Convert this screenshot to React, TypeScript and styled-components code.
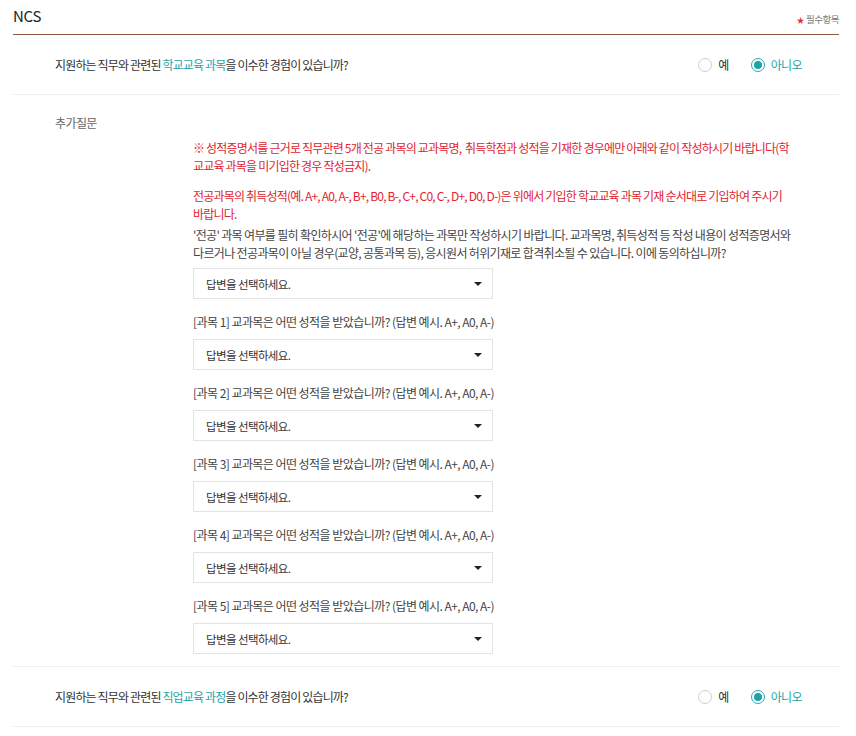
import React from "react";
import styled, { createGlobalStyle } from "styled-components";

const Global = createGlobalStyle`
  html, body { margin: 0; padding: 0; background: #fff; }
  body { font-family: "Noto Sans CJK KR", "Noto Sans", sans-serif; color: #333; }
  * { box-sizing: border-box; }
`;

const Page = styled.div`
  width: 826px;
  margin-left: 13px;
`;

const Header = styled.div`
  height: 35px;
  display: flex;
  align-items: center;
  justify-content: space-between;
  border-bottom: 1px solid #8a5b3e;
`;

const Title = styled.h2`
  margin: 0;
  font-size: 15px;
  font-weight: 400;
  color: #222;
  letter-spacing: -0.3px;
  line-height: 20px;
  margin-top: -2px;
`;

const Required = styled.span`
  font-size: 9.5px;
  color: #777;
  letter-spacing: -0.5px;
  display: flex;
  align-items: center;
  gap: 2px;
  margin-top: 4px;
`;

const Star = styled.span`
  color: #e0323b;
  font-size: 8px;
`;

const QuestionRow = styled.div`
  height: 60px;
  display: flex;
  align-items: center;
  padding-left: 42px;
  padding-right: 37px;
  border-bottom: 1px solid #eeeeee;
`;

const QuestionText = styled.p`
  margin: 0;
  flex: 1;
  font-size: 12px;
  letter-spacing: -0.85px;
  color: #333;
`;

const Accent = styled.span`
  color: #1ea3a8;
`;

const RadioGroup = styled.div`
  display: flex;
  align-items: center;
  gap: 22px;
`;

const RadioLabel = styled.label<{ $checked?: boolean }>`
  display: flex;
  align-items: center;
  gap: 6px;
  font-size: 12px;
  letter-spacing: -0.6px;
  color: ${(p) => (p.$checked ? "#1ea3a8" : "#333")};
`;

const RadioCircle = styled.span<{ $checked?: boolean }>`
  width: 14px;
  height: 14px;
  border-radius: 50%;
  border: 1px solid ${(p) => (p.$checked ? "#2aaab0" : "#cfcfcf")};
  display: flex;
  align-items: center;
  justify-content: center;
  background: #fff;
  &::after {
    content: "";
    width: 8px;
    height: 8px;
    border-radius: 50%;
    background: ${(p) => (p.$checked ? "#1ea3a8" : "transparent")};
  }
`;

const Extra = styled.div`
  padding: 19px 0 12px 42px;
  border-bottom: 1px solid #eeeeee;
`;

const ExtraTitle = styled.div`
  font-size: 12px;
  color: #666;
  letter-spacing: -0.6px;
  line-height: 18px;
`;

const ExtraBody = styled.div`
  margin-left: 138px;
  margin-top: 7px;
  width: 640px;
`;

const Notice = styled.p<{ $tone: "red" | "gray"; $gap: number }>`
  margin: ${(p) => p.$gap}px 0 0;
  font-size: 12px;
  line-height: 18px;
  letter-spacing: ${(p) => (p.$tone === "red" ? "-0.8px" : "-0.65px")};
  color: ${(p) => (p.$tone === "red" ? "#e1242f" : "#444")};
`;

const Field = styled.div<{ $first?: boolean }>`
  margin-top: ${(p) => (p.$first ? 6 : 14)}px;
`;

const FieldLabel = styled.div`
  font-size: 12px;
  line-height: 18px;
  letter-spacing: -0.55px;
  color: #444;
  margin-bottom: 8px;
`;

const Select = styled.div`
  width: 300px;
  height: 31px;
  border: 1px solid #e3e3e3;
  display: flex;
  align-items: center;
  justify-content: space-between;
  padding: 0 10px 0 12px;
  font-size: 11.5px;
  letter-spacing: -0.6px;
  color: #333;
  background: #fff;
`;

const Caret = styled.span`
  width: 0;
  height: 0;
  border-left: 4px solid transparent;
  border-right: 4px solid transparent;
  border-top: 4px solid #222;
`;

function Radios() {
  return (
    <RadioGroup>
      <RadioLabel>
        <RadioCircle />예
      </RadioLabel>
      <RadioLabel $checked>
        <RadioCircle $checked />아니오
      </RadioLabel>
    </RadioGroup>
  );
}

function AnswerSelect() {
  return (
    <Select>
      <span>답변을 선택하세요.</span>
      <Caret />
    </Select>
  );
}

export default function App() {
  return (
    <>
      <Global />
      <Page>
        <Header>
          <Title>NCS</Title>
          <Required>
            <Star>★</Star>필수항목
          </Required>
        </Header>
        <QuestionRow>
          <QuestionText>
            지원하는 직무와 관련된 <Accent>학교교육 과목</Accent>을 이수한 경험이 있습니까?
          </QuestionText>
          <Radios />
        </QuestionRow>
        <Extra>
          <ExtraTitle>추가질문</ExtraTitle>
          <ExtraBody>
            <Notice $tone="red" $gap={0}>
              ※ 성적증명서를 근거로 직무관련 5개 전공 과목의 교과목명,&nbsp; 취득학점과 성적을 기재한 경우에만 아래와 같이 작성하시기 바랍니다(학
              <br />
              교교육 과목을 미기입한 경우 작성금지).
            </Notice>
            <Notice $tone="red" $gap={12}>
              전공과목의 취득성적(예. A+, A0, A-, B+, B0, B-, C+, C0, C-, D+, D0, D-)은 위에서 기입한 학교교육 과목 기재 순서대로 기입하여 주시기
              <br />
              바랍니다.
            </Notice>
            <Notice $tone="gray" $gap={3}>
              '전공' 과목 여부를 필히 확인하시어 '전공'에 해당하는 과목만 작성하시기 바랍니다. 교과목명, 취득성적 등 작성 내용이 성적증명서와
              <br />
              다르거나 전공과목이 아닐 경우(교양, 공통과목 등), 응시원서 허위기재로 합격취소될 수 있습니다. 이에 동의하십니까?
            </Notice>
            <Field $first>
              <AnswerSelect />
            </Field>
            {[1, 2, 3, 4, 5].map((n) => (
              <Field key={n}>
                <FieldLabel>
                  [과목 {n}] 교과목은 어떤 성적을 받았습니까? (답변 예시. A+, A0, A-)
                </FieldLabel>
                <AnswerSelect />
              </Field>
            ))}
          </ExtraBody>
        </Extra>
        <QuestionRow>
          <QuestionText>
            지원하는 직무와 관련된 <Accent>직업교육 과정</Accent>을 이수한 경험이 있습니까?
          </QuestionText>
          <Radios />
        </QuestionRow>
      </Page>
    </>
  );
}
